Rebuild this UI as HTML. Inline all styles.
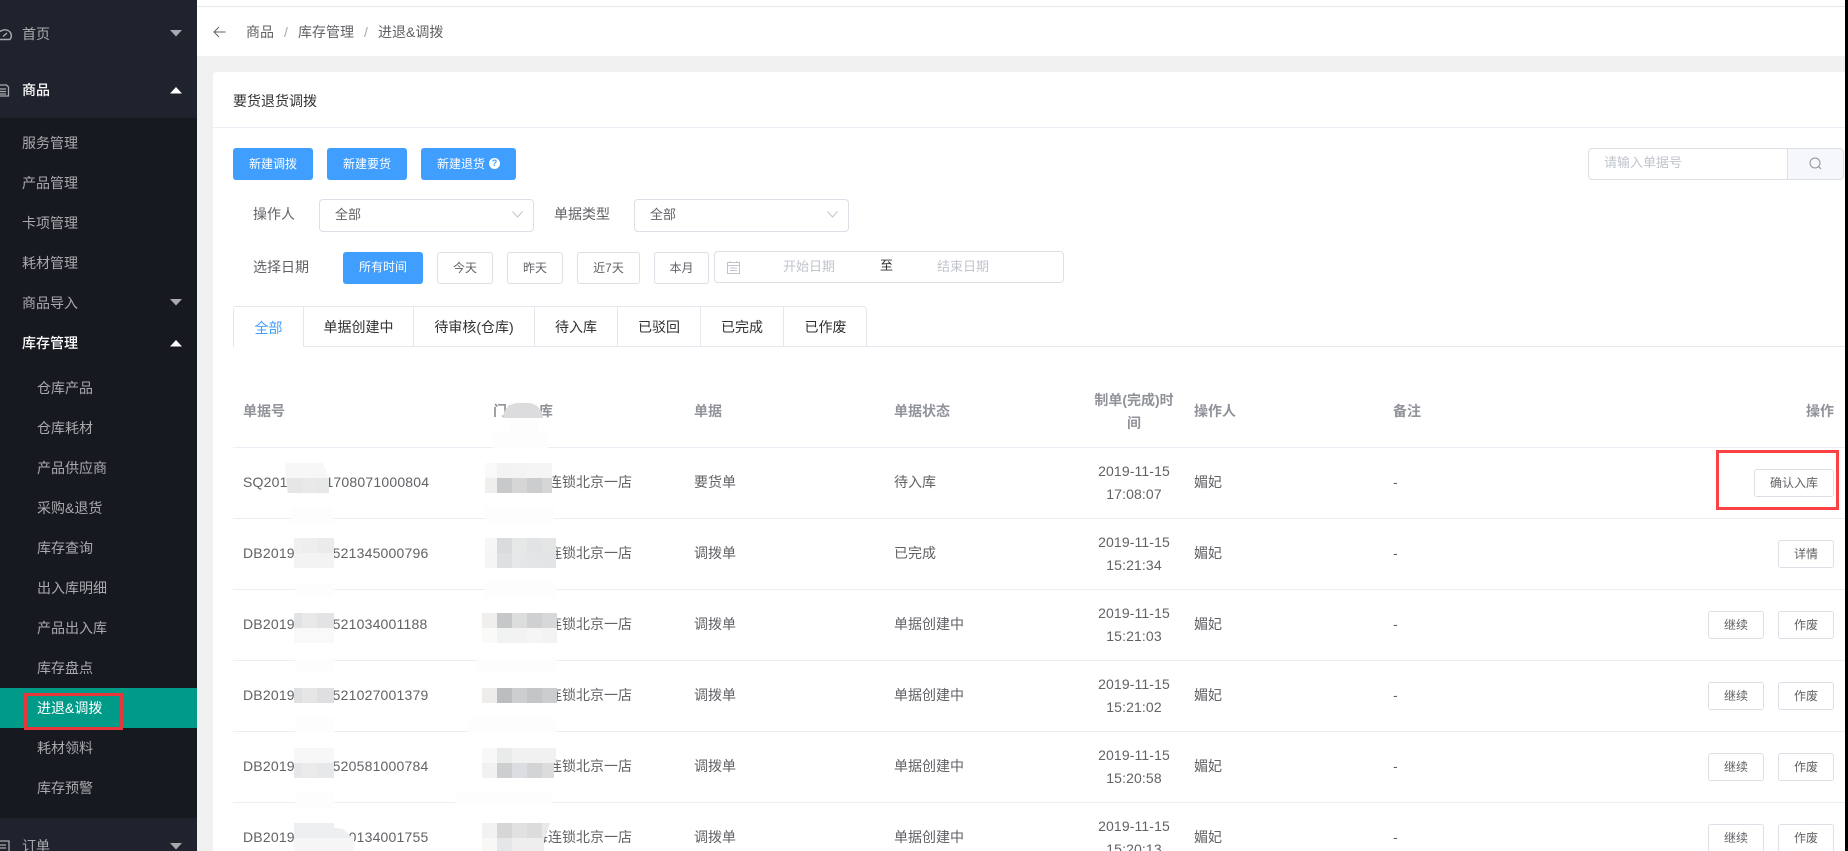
<!DOCTYPE html>
<html lang="zh-CN">
<head>
<meta charset="utf-8">
<title>要货退货调拨</title>
<style>
html,body{margin:0;padding:0;width:1848px;height:851px;overflow:hidden;background:#fff}
body{position:relative;font-family:"Liberation Sans","Noto Sans CJK SC",sans-serif;font-size:14px;color:#606266}
div,span{position:absolute;box-sizing:border-box}
svg{position:absolute;overflow:visible}
.t{height:20px;line-height:20px;white-space:nowrap}
.m{color:#a8aaad;font-size:14px}
.w{color:#fff;font-weight:500}
.h{color:#909399;font-weight:700}
.c{width:120px;left:1074px;text-align:center;letter-spacing:.12px}
.n{letter-spacing:.2px}
.btn{height:32px;line-height:31px;background:#409eff;color:#fff;font-size:12px;text-align:center;border-radius:3px}
.b2{line-height:33px}
.o{height:32px;line-height:30px;border:1px solid #dcdfe6;border-radius:3px;background:#fff;font-size:12px;text-align:center;color:#606266}
.a{height:28px;line-height:26px;border:1px solid #dcdfe6;border-radius:3px;background:#fff;font-size:12px;text-align:center;color:#606266}
.s{height:33px;top:199px;border:1px solid #dcdfe6;border-radius:4px;background:#fff}
.tab{top:306px;height:40px;line-height:42px;text-align:center;color:#303133;border-right:1px solid #e4e7ed}
.l{left:233px;width:1612px;height:1px;background:#ebeef5}
.p{background:#fdfdfd}
</style>
</head>
<body>
<!-- sidebar -->
<div style="left:0;top:0;width:197px;height:851px;background:#171920"></div>
<div style="left:0;top:0;width:197px;height:118px;background:#1f232d"></div>
<div style="left:0;top:818px;width:197px;height:33px;background:#1f232d"></div>
<div style="left:0;top:688px;width:197px;height:40px;background:#009a88"></div>

<svg style="left:0;top:26px" width="14" height="16" viewBox="0 0 14 16" fill="none" stroke="#a8aaad" stroke-width="1.4"><path d="M0 13.5H9.8C11 12.3 11.5 10.6 11.3 9 10.9 5.8 8 3.6 4.6 3.8 3 3.9 1.4 4.5 0 5.5"/><path d="M3 10.5 7 7"/></svg>
<svg style="left:0;top:83px" width="12" height="14" viewBox="0 0 12 14" fill="none" stroke="#a8aaad" stroke-width="1.3"><path d="M0 2H6.5L8.5 4V13H0"/><path d="M0 6H6M0 8.5H6M0 11H6"/></svg>
<svg style="left:0;top:840px" width="12" height="12" viewBox="0 0 12 12" fill="none" stroke="#a8aaad" stroke-width="1.3"><path d="M0 1H9V12H0"/><path d="M0 5H6M0 8H6"/></svg>

<div class="t m" style="left:22px;top:24px">首页</div>
<div class="t w" style="left:22px;top:80px">商品</div>
<div class="t m" style="left:22px;top:133px">服务管理</div>
<div class="t m" style="left:22px;top:173px">产品管理</div>
<div class="t m" style="left:22px;top:213px">卡项管理</div>
<div class="t m" style="left:22px;top:253px">耗材管理</div>
<div class="t m" style="left:22px;top:293px">商品导入</div>
<div class="t w" style="left:22px;top:333px">库存管理</div>
<div class="t m" style="left:37px;top:378px">仓库产品</div>
<div class="t m" style="left:37px;top:418px">仓库耗材</div>
<div class="t m" style="left:37px;top:458px">产品供应商</div>
<div class="t m" style="left:37px;top:498px">采购&amp;退货</div>
<div class="t m" style="left:37px;top:538px">库存查询</div>
<div class="t m" style="left:37px;top:578px">出入库明细</div>
<div class="t m" style="left:37px;top:618px">产品出入库</div>
<div class="t m" style="left:37px;top:658px">库存盘点</div>
<div class="t" style="left:37px;top:698px;color:#fff">进退&amp;调拨</div>
<div class="t m" style="left:37px;top:738px">耗材领料</div>
<div class="t m" style="left:37px;top:778px">库存预警</div>
<div class="t m" style="left:22px;top:836px">订单</div>

<svg style="left:170px;top:30px" width="12" height="7"><path d="M0 0H12L6 6.5Z" fill="#a8aaad"/></svg>
<svg style="left:170px;top:87px" width="12" height="7"><path d="M0 6.5H12L6 0Z" fill="#fff"/></svg>
<svg style="left:170px;top:299px" width="12" height="7"><path d="M0 0H12L6 6.5Z" fill="#a8aaad"/></svg>
<svg style="left:170px;top:340px" width="12" height="7"><path d="M0 6.5H12L6 0Z" fill="#fff"/></svg>
<svg style="left:170px;top:843px" width="12" height="7"><path d="M0 0H12L6 6.5Z" fill="#a8aaad"/></svg>

<!-- page background and top -->
<div style="left:197px;top:0;width:1648px;height:851px;background:#f0f0f0"></div>
<div style="left:197px;top:0;width:1648px;height:6px;background:#fff"></div>
<div style="left:197px;top:6px;width:1648px;height:1px;background:#e8e8e8"></div>
<div style="left:197px;top:7px;width:1648px;height:49px;background:#fff"></div>
<svg style="left:213px;top:26px" width="13" height="12" viewBox="0 0 13 12" fill="none" stroke="#606266" stroke-width="1"><path d="M12.5 6H1M6 1 1 6 6 11"/></svg>
<div class="t" style="left:246px;top:22px">商品</div>
<div class="t" style="left:284px;top:22px;color:#a5a8ae">/</div>
<div class="t" style="left:298px;top:22px">库存管理</div>
<div class="t" style="left:364px;top:22px;color:#a5a8ae">/</div>
<div class="t" style="left:378px;top:22px">进退&amp;调拨</div>

<!-- card -->
<div style="left:213px;top:72px;width:1632px;height:779px;background:#fff;border-radius:3px 0 0 0"></div>
<div class="t" style="left:233px;top:91px;color:#303133">要货退货调拨</div>
<div style="left:213px;top:127px;width:1632px;height:1px;background:#ebeef5"></div>

<div class="btn b2" style="left:233px;top:148px;width:80px">新建调拨</div>
<div class="btn b2" style="left:327px;top:148px;width:80px">新建要货</div>
<div class="btn b2" style="left:421px;top:148px;width:95px;text-align:left;padding-left:16px">新建退货</div>
<div style="left:489px;top:158px;width:11px;height:11px;border-radius:50%;background:#fff;color:#409eff;font-size:9px;line-height:11px;text-align:center;font-weight:700">?</div>

<!-- search -->
<div style="left:1588px;top:148px;width:256px;height:32px;border:1px solid #dcdfe6;border-radius:4px;background:#fff"></div>
<div style="left:1787px;top:149px;width:56px;height:30px;background:#f5f7fa;border-left:1px solid #dcdfe6;border-radius:0 3px 3px 0"></div>
<div class="t" style="left:1604px;top:153px;font-size:13px;color:#c0c4cc">请输入单据号</div>
<svg style="left:1809px;top:157px" width="13" height="13" viewBox="0 0 13 13" fill="none" stroke="#8f939a" stroke-width="1"><circle cx="6" cy="6" r="5"/><path d="M9.6 9.6 12 12"/></svg>

<!-- filters -->
<div class="t" style="left:253px;top:204px">操作人</div>
<div class="s" style="left:319px;width:215px"></div>
<div class="t" style="left:335px;top:205px;font-size:13px">全部</div>
<svg style="left:512px;top:211px" width="11" height="7" viewBox="0 0 11 7" fill="none" stroke="#c0c4cc"><path d="M.5 .5 5.5 6 10.5 .5"/></svg>
<div class="t" style="left:554px;top:204px">单据类型</div>
<div class="s" style="left:634px;width:215px"></div>
<div class="t" style="left:650px;top:205px;font-size:13px">全部</div>
<svg style="left:827px;top:211px" width="11" height="7" viewBox="0 0 11 7" fill="none" stroke="#c0c4cc"><path d="M.5 .5 5.5 6 10.5 .5"/></svg>

<div class="t" style="left:253px;top:257px">选择日期</div>
<div class="btn" style="left:343px;top:252px;width:80px">所有时间</div>
<div class="o" style="left:437px;top:252px;width:56px">今天</div>
<div class="o" style="left:507px;top:252px;width:56px">昨天</div>
<div class="o" style="left:577px;top:252px;width:63px">近7天</div>
<div class="o" style="left:654px;top:252px;width:55px">本月</div>
<div style="left:714px;top:251px;width:350px;height:32px;border:1px solid #dcdfe6;border-radius:4px;background:#fff"></div>
<svg style="left:727px;top:261px" width="13" height="13" viewBox="0 0 13 13" fill="none" stroke="#c0c4cc" stroke-width="1"><rect x=".5" y="1.5" width="12" height="11"/><path d="M.5 4.5H12.5M3 7H10M3 9.5H10M3 0V2M10 0V2"/></svg>
<div class="t" style="left:783px;top:257px;font-size:13px;color:#c0c4cc">开始日期</div>
<div class="t" style="left:880px;top:256px;font-size:13px;color:#303133">至</div>
<div class="t" style="left:937px;top:257px;font-size:13px;color:#c0c4cc">结束日期</div>

<!-- tabs -->
<div style="left:233px;top:306px;width:634px;height:40px;border:1px solid #e4e7ed;border-bottom:0;border-radius:4px 4px 0 0"></div>
<div style="left:233px;top:346px;width:1612px;height:1px;background:#e4e7ed"></div>
<div class="tab" style="left:234px;width:70px;color:#409eff;background:#fff;height:41px;top:306px;border-top:1px solid #e4e7ed">全部</div>
<div class="tab" style="left:304px;width:110px">单据创建中</div>
<div class="tab" style="left:414px;width:121px">待审核(仓库)</div>
<div class="tab" style="left:535px;width:83px">待入库</div>
<div class="tab" style="left:618px;width:83px">已驳回</div>
<div class="tab" style="left:701px;width:83px">已完成</div>
<div class="tab" style="left:784px;width:83px;border-right:0">已作废</div>

<!-- table head -->
<div class="t h" style="left:243px;top:401px">单据号</div>
<div class="t h" style="left:493px;top:401px">门店/仓库</div>
<div class="t h" style="left:694px;top:401px">单据</div>
<div class="t h" style="left:894px;top:401px">单据状态</div>
<div class="t h c" style="top:390px;letter-spacing:0">制单(完成)时</div>
<div class="t h c" style="top:413px;letter-spacing:0">间</div>
<div class="t h" style="left:1194px;top:401px">操作人</div>
<div class="t h" style="left:1393px;top:401px">备注</div>
<div class="t h" style="right:14px;top:401px">操作</div>

<div class="l" style="top:447px"></div>
<div class="l" style="top:518px"></div>
<div class="l" style="top:589px"></div>
<div class="l" style="top:660px"></div>
<div class="l" style="top:731px"></div>
<div class="l" style="top:802px"></div>

<!-- row 1 -->
<div class="t n" style="left:243px;top:472px">SQ201911151708071000804</div>
<div class="t" style="left:548px;top:472px">连锁北京一店</div>
<div class="t" style="left:694px;top:472px">要货单</div>
<div class="t" style="left:894px;top:472px">待入库</div>
<div class="t c" style="top:461px">2019-11-15</div>
<div class="t c" style="top:484px">17:08:07</div>
<div class="t" style="left:1194px;top:472px">媚妃</div>
<div class="t" style="left:1393px;top:472px">-</div>
<div class="a" style="left:1754px;top:469px;width:80px">确认入库</div>
<!-- row 2 -->
<div class="t n" style="left:243px;top:543px">DB201911151521345000796</div>
<div class="t" style="left:548px;top:543px">连锁北京一店</div>
<div class="t" style="left:694px;top:543px">调拨单</div>
<div class="t" style="left:894px;top:543px">已完成</div>
<div class="t c" style="top:532px">2019-11-15</div>
<div class="t c" style="top:555px">15:21:34</div>
<div class="t" style="left:1194px;top:543px">媚妃</div>
<div class="t" style="left:1393px;top:543px">-</div>
<div class="a" style="left:1778px;top:540px;width:56px">详情</div>
<!-- row 3 -->
<div class="t n" style="left:243px;top:614px">DB201911151521034001188</div>
<div class="t" style="left:548px;top:614px">连锁北京一店</div>
<div class="t" style="left:694px;top:614px">调拨单</div>
<div class="t" style="left:894px;top:614px">单据创建中</div>
<div class="t c" style="top:603px">2019-11-15</div>
<div class="t c" style="top:626px">15:21:03</div>
<div class="t" style="left:1194px;top:614px">媚妃</div>
<div class="t" style="left:1393px;top:614px">-</div>
<div class="a" style="left:1708px;top:611px;width:56px">继续</div>
<div class="a" style="left:1778px;top:611px;width:56px">作废</div>
<!-- row 4 -->
<div class="t n" style="left:243px;top:685px">DB201911151521027001379</div>
<div class="t" style="left:548px;top:685px">连锁北京一店</div>
<div class="t" style="left:694px;top:685px">调拨单</div>
<div class="t" style="left:894px;top:685px">单据创建中</div>
<div class="t c" style="top:674px">2019-11-15</div>
<div class="t c" style="top:697px">15:21:02</div>
<div class="t" style="left:1194px;top:685px">媚妃</div>
<div class="t" style="left:1393px;top:685px">-</div>
<div class="a" style="left:1708px;top:682px;width:56px">继续</div>
<div class="a" style="left:1778px;top:682px;width:56px">作废</div>
<!-- row 5 -->
<div class="t n" style="left:243px;top:756px">DB201911151520581000784</div>
<div class="t" style="left:548px;top:756px">连锁北京一店</div>
<div class="t" style="left:694px;top:756px">调拨单</div>
<div class="t" style="left:894px;top:756px">单据创建中</div>
<div class="t c" style="top:745px">2019-11-15</div>
<div class="t c" style="top:768px">15:20:58</div>
<div class="t" style="left:1194px;top:756px">媚妃</div>
<div class="t" style="left:1393px;top:756px">-</div>
<div class="a" style="left:1708px;top:753px;width:56px">继续</div>
<div class="a" style="left:1778px;top:753px;width:56px">作废</div>
<!-- row 6 -->
<div class="t n" style="left:243px;top:827px">DB201911151520134001755</div>
<div class="t" style="left:534px;top:827px">每连锁北京一店</div>
<div class="t" style="left:694px;top:827px">调拨单</div>
<div class="t" style="left:894px;top:827px">单据创建中</div>
<div class="t c" style="top:816px">2019-11-15</div>
<div class="t c" style="top:839px">15:20:13</div>
<div class="t" style="left:1194px;top:827px">媚妃</div>
<div class="t" style="left:1393px;top:827px">-</div>
<div class="a" style="left:1708px;top:824px;width:56px">继续</div>
<div class="a" style="left:1778px;top:824px;width:56px">作废</div>

<!-- blurred patches: order number column -->
<div style="left:285px;top:463px;width:44px;height:15px;background:#f7f7f7;clip-path:polygon(0 0,86% 0,100% 100%,2% 100%)"></div>
<div style="left:286px;top:478px;width:43px;height:15px;background:linear-gradient(90deg,#e6e6e7 0 16px,#e9e9ea 16px 31px,#e6e7e7 31px);clip-path:polygon(0 0,100% 0,100% 100%,4% 100%)"></div>
<div style="left:294px;top:538px;width:40px;height:15px;background:linear-gradient(90deg,#f0f0f1 0 8px,#eeeeef 8px 23px,#ebebec 23px)"></div>
<div style="left:294px;top:553px;width:40px;height:15px;background:#f3f3f4"></div>
<div style="left:294px;top:613px;width:40px;height:15px;background:linear-gradient(90deg,#e2e3e4 0 8px,#e9e9ea 8px 23px,#e3e3e5 23px)"></div>
<div style="left:294px;top:628px;width:40px;height:15px;background:#f9f9f9"></div>
<div style="left:294px;top:688px;width:40px;height:15px;background:linear-gradient(90deg,#dfe0e2 0 8px,#e6e6e7 8px 23px,#dfdfe1 23px)"></div>
<div style="left:294px;top:748px;width:40px;height:15px;background:#f7f7f7"></div>
<div style="left:294px;top:763px;width:40px;height:15px;background:linear-gradient(90deg,#e7e7e9 0 8px,#ebebec 8px 23px,#e7e8e9 23px)"></div>
<div style="left:294px;top:823px;width:58px;height:15px;background:#eeeff0;clip-path:polygon(0 0,69% 0,69% 30%,85% 40%,100% 100%,0 100%)"></div>
<div style="left:294px;top:838px;width:60px;height:13px;background:#f6f6f6"></div>
<div class="p" style="left:291px;top:508px;width:42px;height:15px"></div>
<div class="p" style="left:295px;top:583px;width:39px;height:15px"></div>
<div class="p" style="left:295px;top:658px;width:39px;height:15px"></div>
<div class="p" style="left:295px;top:718px;width:39px;height:15px"></div>
<div class="p" style="left:295px;top:793px;width:39px;height:15px"></div>

<!-- blurred patches: store column -->
<div style="left:503px;top:403px;width:40px;height:15px;background:#dcdcde;border-radius:20px 20px 0 0"></div>
<div class="p" style="left:510px;top:418px;width:28px;height:15px"></div>
<div class="p" style="left:493px;top:433px;width:55px;height:16px"></div>
<div style="left:485px;top:463px;width:67px;height:15px;background:linear-gradient(90deg,#f9f9f9 0 12px,#f3f3f4 12px 27px,#f4f4f4 27px 42px,#f5f5f5 42px)"></div>
<div style="left:485px;top:478px;width:67px;height:15px;background:linear-gradient(90deg,#efefee 0 12px,#c8c9cb 12px 27px,#d6d6d6 27px 42px,#cbcccd 42px 57px,#d5d5d5 57px)"></div>
<div class="p" style="left:485px;top:507px;width:69px;height:15px"></div>
<div style="left:485px;top:538px;width:71px;height:15px;background:linear-gradient(90deg,#f6f6f6 0 12px,#dadbdc 12px 27px,#e6e8e8 27px 42px,#e2e3e4 42px 57px,#e4e5e5 57px)"></div>
<div style="left:485px;top:553px;width:71px;height:15px;background:linear-gradient(90deg,#f5f5f5 0 12px,#dedfe1 12px 27px,#e6e7e8 27px 42px,#e4e5e6 42px 57px,#e3e4e5 57px)"></div>
<div class="p" style="left:485px;top:582px;width:71px;height:15px"></div>
<div style="left:482px;top:613px;width:75px;height:15px;background:linear-gradient(90deg,#f0efee 0 15px,#c6c7c9 15px 30px,#dcdddd 30px 45px,#cfd0d2 45px 60px,#d7d8da 60px)"></div>
<div style="left:482px;top:628px;width:75px;height:15px;background:linear-gradient(90deg,#fafaf8 0 15px,#f1f2f2 15px 30px,#f2f2f2 30px 45px,#f5f5f5 45px 60px,#f3f3f4 60px)"></div>
<div class="p" style="left:477px;top:658px;width:80px;height:15px"></div>
<div style="left:482px;top:688px;width:75px;height:15px;background:linear-gradient(90deg,#eeedeb 0 15px,#bcbdbf 15px 30px,#cdced0 30px 45px,#c4c5c7 45px 60px,#cccdcf 60px)"></div>
<div class="p" style="left:467px;top:718px;width:90px;height:15px"></div>
<div style="left:482px;top:748px;width:74px;height:15px;background:linear-gradient(90deg,#f8f8f8 0 15px,#e9ebeb 15px 30px,#f1f1f1 30px 45px,#f1f1f2 45px 60px,#f1f1f1 60px)"></div>
<div style="left:482px;top:763px;width:72px;height:15px;background:linear-gradient(90deg,#f2f1f1 0 15px,#cdced0 15px 30px,#dcdde0 30px 45px,#d3d4d6 45px 60px,#dcdcdc 60px)"></div>
<div class="p" style="left:455px;top:792px;width:97px;height:14px"></div>
<div style="left:482px;top:823px;width:68px;height:15px;background:linear-gradient(90deg,#f2f2f2 0 15px,#d6d6d6 15px 30px,#e1e1e1 30px 45px,#dcdcdc 45px 60px,#e9e9e9 60px);clip-path:polygon(0 0,100% 0,92% 100%,0 100%)"></div>
<div style="left:482px;top:838px;width:62px;height:13px;background:linear-gradient(90deg,#f8f8f6 0 15px,#e5e6e8 15px 30px,#eeeeef 30px)"></div>

<!-- annotations -->
<div style="left:24px;top:693px;width:99px;height:37px;border:3px solid #e8363b"></div>
<div style="left:1716px;top:450px;width:123px;height:60px;border:3px solid #fb4144"></div>

<!-- scrollbar edge -->
<div style="left:1845px;top:0;width:3px;height:851px;background:#000"></div>
</body>
</html>
